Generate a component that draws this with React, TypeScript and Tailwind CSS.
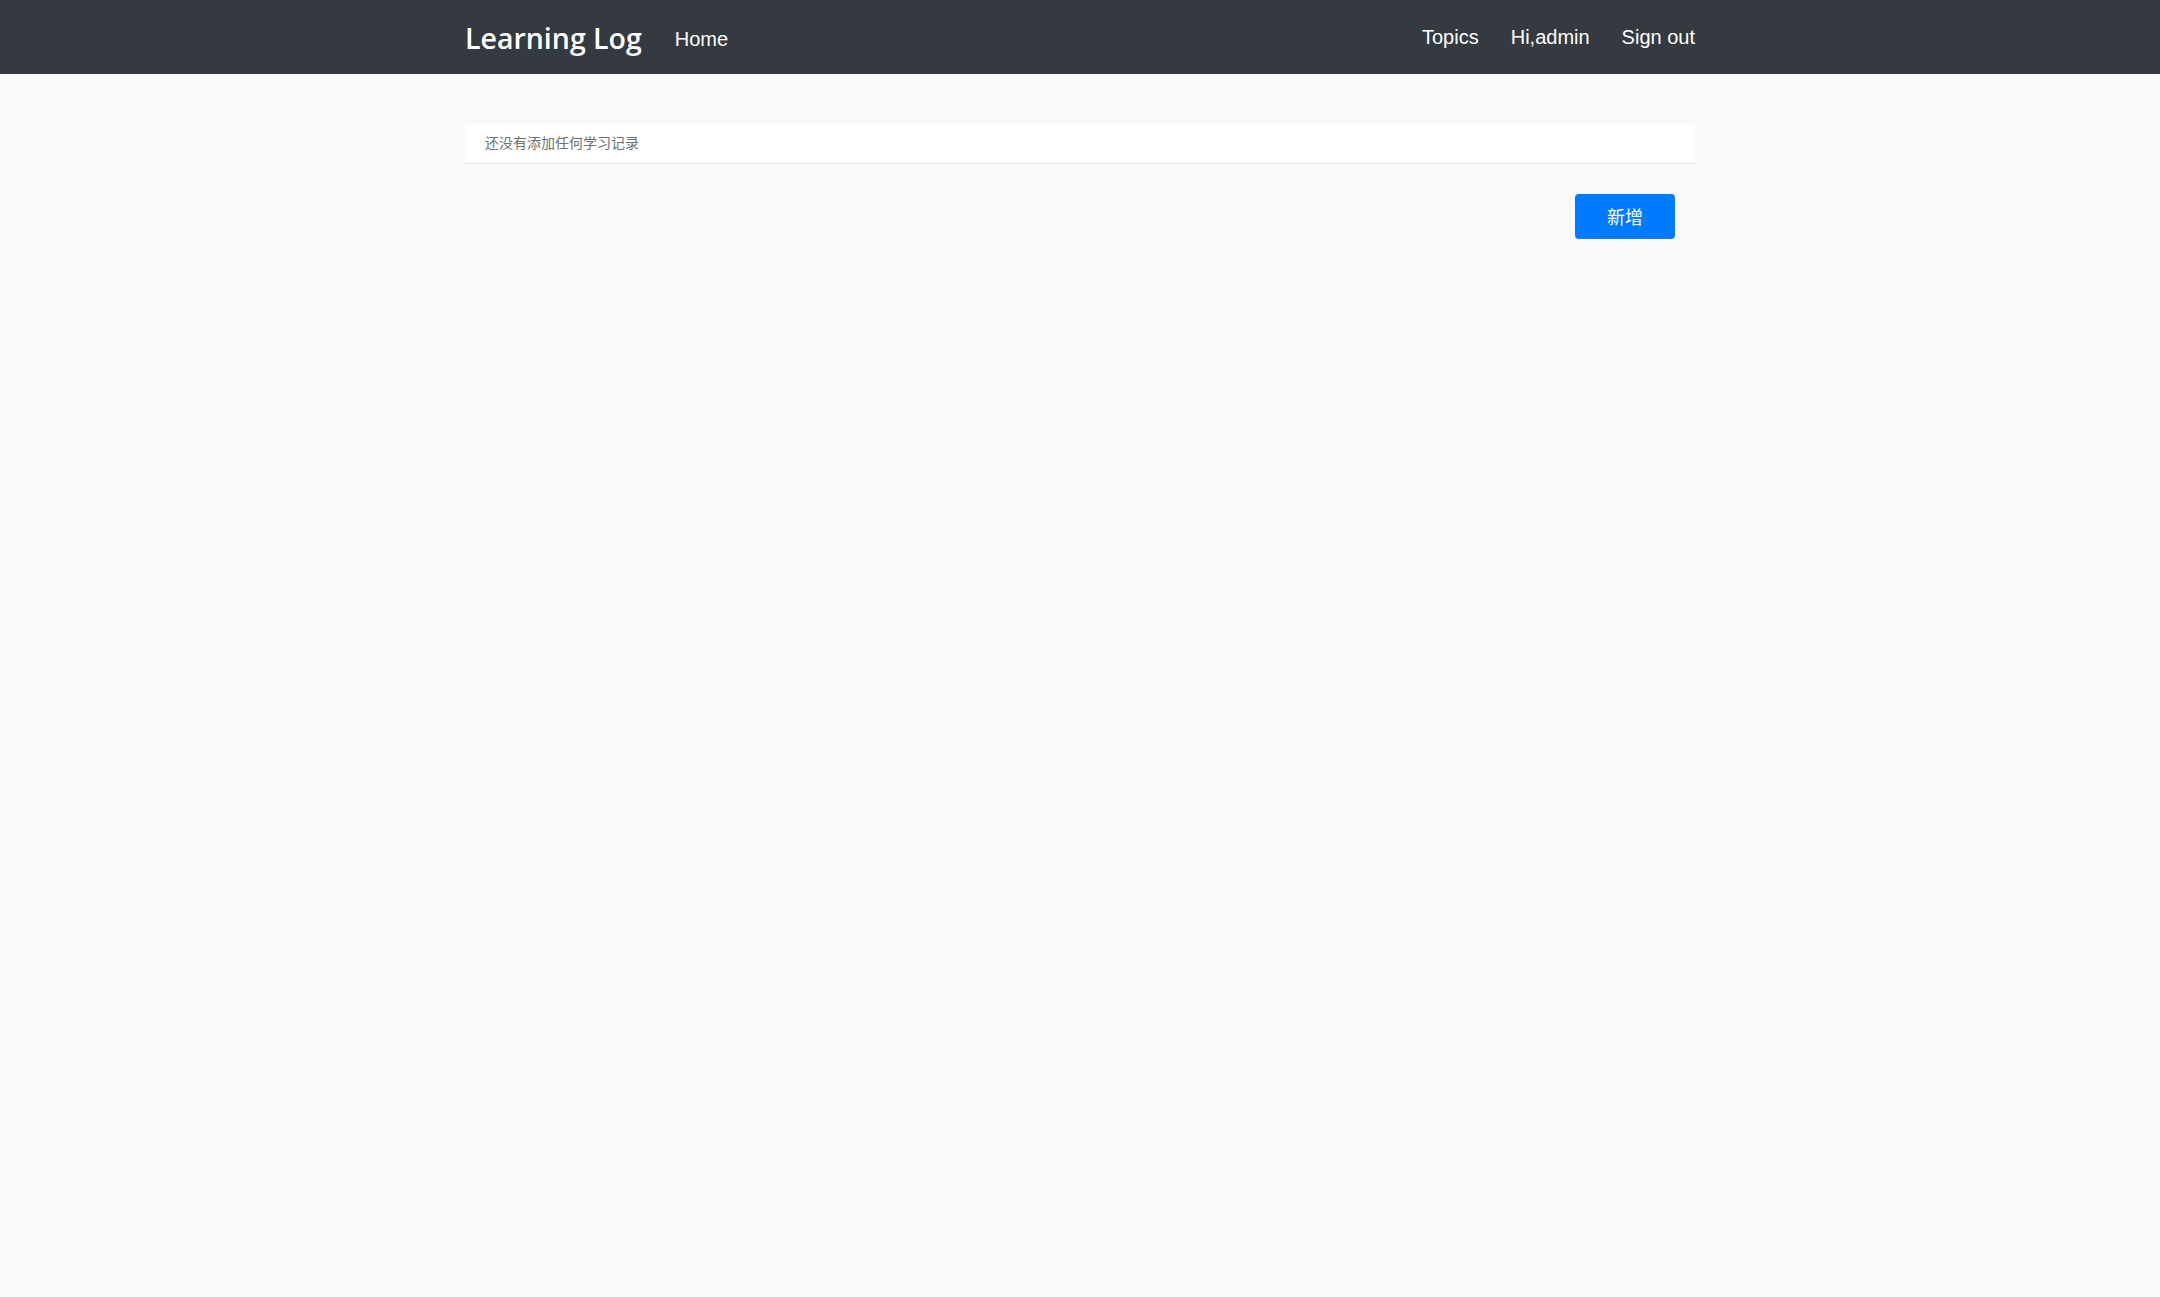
import React from "react";

export default function App() {
  return (
    <div className="min-h-[1297px] bg-[#f9f9f9]" style={{ fontFamily: '"Liberation Sans", Arial, "Noto Sans CJK SC", sans-serif' }}>
      <nav className="h-[74px] bg-[#343a40]">
        <div className="mx-auto flex h-full w-[1230px] items-center">
          <a className="text-[28.5px] font-semibold leading-none text-white pt-[2px]" style={{ fontFamily: '"Open Sans", "Noto Sans CJK SC", sans-serif' }}>
            Learning Log
          </a>
          <a className="ml-[33px] pt-[4px] text-[20px] leading-none text-white">Home</a>
          <div className="ml-auto flex items-center gap-[32px] text-[20px] leading-none text-white">
            <a>Topics</a>
            <a>Hi,admin</a>
            <a>Sign out</a>
          </div>
        </div>
      </nav>
      <main className="mx-auto w-[1230px] pt-[50px]">
        <div className="flex h-[40px] items-center border-b border-[#e8e8e8] bg-white px-[20px] pb-[2px] text-[14px] text-[#6f6f6f]" style={{ fontFamily: '"Noto Sans CJK SC", sans-serif' }}>
          还没有添加任何学习记录
        </div>
        <div className="mt-[30px] flex justify-end pr-[20px]">
          <button className="flex h-[45px] w-[100px] items-center justify-center rounded-[4px] bg-[#007bff] text-[18px] text-white" style={{ fontFamily: '"Noto Sans CJK SC", sans-serif' }}>
            新增
          </button>
        </div>
      </main>
    </div>
  );
}
